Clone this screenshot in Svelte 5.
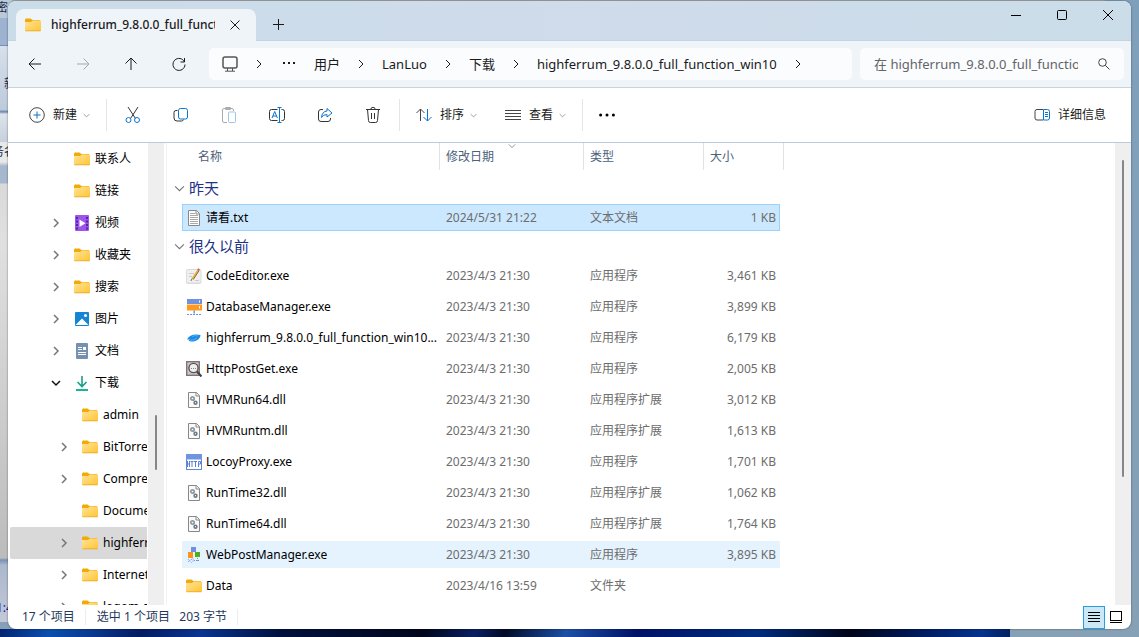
<script>
	const crumbs = ["用户", "LanLuo", "下载", "highferrum_9.8.0.0_full_function_win10"];

	const tree = [
		{ name: "联系人", icon: "folder" },
		{ name: "链接", icon: "folder" },
		{ name: "视频", icon: "video", arrow: "closed" },
		{ name: "收藏夹", icon: "folder", arrow: "closed" },
		{ name: "搜索", icon: "folder", arrow: "closed" },
		{ name: "图片", icon: "picture", arrow: "closed" },
		{ name: "文档", icon: "document", arrow: "closed" },
		{ name: "下载", icon: "download", arrow: "open" },
		{ name: "admin", icon: "folder", child: true },
		{ name: "BitTorrent", icon: "folder", child: true, arrow: "closed" },
		{ name: "Compressed", icon: "folder", child: true, arrow: "closed" },
		{ name: "Documents", icon: "folder", child: true },
		{ name: "highferrum_9.8.0.0", icon: "folder", child: true, arrow: "closed" },
		{ name: "Internet", icon: "folder", child: true, arrow: "closed" },
		{ name: "logom.cn", icon: "folder", child: true, arrow: "closed" },
	];

	const columns = ["名称", "修改日期", "类型", "大小"];

	const groups = [
		{
			title: "昨天",
			files: [{ name: "请看.txt", icon: "text", date: "2024/5/31 21:22", type: "文本文档", size: "1 KB" }],
		},
		{
			title: "很久以前",
			files: [
				{ name: "CodeEditor.exe", icon: "editor", date: "2023/4/3 21:30", type: "应用程序", size: "3,461 KB" },
				{ name: "DatabaseManager.exe", icon: "database", date: "2023/4/3 21:30", type: "应用程序", size: "3,899 KB" },
				{ name: "highferrum_9.8.0.0_full_function_win10...", icon: "train", date: "2023/4/3 21:30", type: "应用程序", size: "6,179 KB" },
				{ name: "HttpPostGet.exe", icon: "lens", date: "2023/4/3 21:30", type: "应用程序", size: "2,005 KB" },
				{ name: "HVMRun64.dll", icon: "dll", date: "2023/4/3 21:30", type: "应用程序扩展", size: "3,012 KB" },
				{ name: "HVMRuntm.dll", icon: "dll", date: "2023/4/3 21:30", type: "应用程序扩展", size: "1,613 KB" },
				{ name: "LocoyProxy.exe", icon: "http", date: "2023/4/3 21:30", type: "应用程序", size: "1,701 KB" },
				{ name: "RunTime32.dll", icon: "dll", date: "2023/4/3 21:30", type: "应用程序扩展", size: "1,062 KB" },
				{ name: "RunTime64.dll", icon: "dll", date: "2023/4/3 21:30", type: "应用程序扩展", size: "1,764 KB" },
				{ name: "WebPostManager.exe", icon: "web", date: "2023/4/3 21:30", type: "应用程序", size: "3,895 KB" },
				{ name: "Data", icon: "folder", date: "2023/4/16 13:59", type: "文件夹", size: "" },
			],
		},
	];

	let currentFolder = $state("highferrum_9.8.0.0");
	let selected = $state("请看.txt");
	let hovered = $state("WebPostManager.exe");
	let view = $state("details");
</script>

{#snippet chevron(dir, size = 10)}
	<svg class="line" width={size} height={size} viewBox="0 0 10 10">
		{#if dir === "right"}
			<path d="M3 1l4 4-4 4" />
		{:else}
			<path d="M1 3l4 4 4-4" />
		{/if}
	</svg>
{/snippet}

{#snippet icon(name)}
	<svg class="icon" width="16" height="16" viewBox="0 0 16 16">
		{#if name === "folder"}
			<path fill="#f2a90d" d="M0 3.2C0 2 .5 1.500 1.500 1.500H5.500L7.500 3H15V7H0z" />
			<path fill="url(#folder-fill)" d="M0 5H6L8 3.500H15C15.700 3.500 16 3.900 16 4.500V13C16 13.700 15.700 14 15 14H1C.3 14 0 13.700 0 13z" />
			<path fill="#e8a317" d="M.4 13.500H15.600V14.200H.4z" />
		{:else if name === "video"}
			<rect x="1" width="14" height="16" rx="1" fill="#9b55ea" />
			<path fill="#5b21a8" d="M2 2h2v2H2zM2 5.500h2v2H2zM2 9h2v2H2zM2 12.500h2v2H2zM12 2h2v2h-2zM12 5.500h2v2h-2zM12 9h2v2h-2zM12 12.500h2v2h-2z" />
			<path fill="#fff" d="M5.500 4.500l6 3.700-6 3.700z" />
		{:else if name === "picture"}
			<rect x="1" y="1" width="14" height="14" rx="1" fill="#1385d4" />
			<path fill="#fff" d="M1.500 14l6.500-6.500 6.500 6.500z" />
			<circle cx="11.500" cy="4.500" r="1.500" fill="#fff" />
		{:else if name === "document"}
			<rect x="2" y="0" width="12" height="16" rx="1" fill="#7492b0" />
			<path stroke="#fff" stroke-width="1" d="M4 4.500h4M4 6.500h4M4 9.500h8M4 11.500h8" />
			<path fill="#fff" d="M9 4h3v3H9z" />
		{:else if name === "download"}
			<path fill="none" stroke="#16a085" stroke-width="1.600" d="M8 1v10M3.500 7L8 11.500 12.500 7" />
			<path stroke="#1bb39a" stroke-width="2" d="M2 15h12" />
		{:else if name === "text"}
			<path fill="#fff" stroke="#888" d="M2.500.5h8l3 3v12h-11z" />
			<path fill="none" stroke="#888" d="M10 .5v3.500h3.500" />
			<path stroke="#aaa" d="M4 3.500h5M4 5.500h8M4 7.500h8M4 9.500h8M4 11.500h8M4 13.500h8" />
		{:else if name === "editor"}
			<rect y="1" width="15.500" height="15" rx="2" fill="#dcdcdc" />
			<rect x="1" y="2" width="13.500" height="12.500" rx="1" fill="#efefef" />
			<path stroke="#bbb" stroke-width=".7" d="M3 5.500h5M3 8.500h3M9 12.500h4" />
			<path stroke="#e8b23a" stroke-width="2.200" d="M6.500 11L12 2.500" />
			<path stroke="#654" stroke-width=".8" d="M5 13l1-2.500M7.200 11.500l6-9" />
			<path stroke="#c9604c" stroke-width="2" d="M12 2.500L13 .8" />
		{:else if name === "database"}
			<path fill="#6f91df" d="M1 0h15v5H1z" />
			<path fill="#ff9a20" d="M1 5.500h15v6H1z" />
			<path fill="#fff" d="M13 1.500h1v2h-1zM13 7h1v2.500h-1z" />
			<path fill="#6f91df" d="M7.500 11.500h1.500v3H7.500z" />
			<path stroke="#6f91df" stroke-dasharray="2 1" d="M1 15.500h15" />
		{:else if name === "train"}
			<path fill="#188be8" d="M1 9.500C3.500 5 8 3.500 14.500 5C14.500 7 13 9 11 10.300C8 12 4 11.800 2.500 10.800L4 9.500z" />
			<path fill="none" stroke="#7cc4ff" stroke-width=".6" d="M6 6.500Q9 5 12 6M4 10.300Q8 10.500 11 8" />
		{:else if name === "lens"}
			<rect x=".7" y=".7" width="12.600" height="13.600" fill="#ccc6c6" stroke="#7c6c6c" stroke-width="1.300" />
			<circle cx="7.500" cy="7" r="4.600" fill="#eee" stroke="#555" stroke-width="1.400" />
			<path stroke="#888" stroke-dasharray="1 1" d="M5 7.500h5" />
			<path stroke="#444" stroke-width="2.200" d="M11 10.500l4.500 5" />
		{:else if name === "dll"}
			<path fill="#fafafa" stroke="#888" d="M2.500.5h8l3 3v12h-11z" />
			<path fill="none" stroke="#888" d="M10 .5v3.500h3.500" />
			<circle cx="6.500" cy="6.500" r="1.700" fill="#fff" stroke="#8f9da6" stroke-width="1.800" />
			<circle cx="9.500" cy="10.700" r="1.400" fill="#fff" stroke="#6c7a83" stroke-width="1.600" />
		{:else if name === "http"}
			<rect x=".5" y=".5" width="15" height="15" fill="#fff" stroke="#6287d8" />
			<path fill="#7094e0" d="M0 0h16v5.500H0z" />
			<path fill="none" stroke="#5a80d4" d="M1.500 7v6M3.500 7v6M1.500 10h2M4.500 7.500h3M6 7.500V13M8 7.500h3M9.500 7.500V13M12.500 13V7.500h2V10h-2" />
		{:else if name === "web"}
			<path fill="#6f91df" d="M5 0h5v5H5z" />
			<path fill="#ff9218" d="M2 5h5v6H2z" />
			<path fill="#4caf20" d="M9 5h5v5H9z" />
			<path fill="none" stroke="#6f91df" stroke-dasharray="1 1" d="M2 12l4 4M7 11.500v4M2 15l4-3M11.500 11v4M8 13.500h6" />
		{/if}
	</svg>
{/snippet}

<svg class="defs" width="0" height="0" aria-hidden="true">
	<linearGradient id="folder-fill" x2="1" y2="1">
		<stop offset="0" stop-color="#ffe499" />
		<stop offset="1" stop-color="#ffc533" />
	</linearGradient>
</svg>

<div class="desktop">
	<!-- another program's window, only its edge peeks out -->
	<div class="behind" aria-hidden="true">
		<span class="crop one">密</span>
		<span class="crop two">新</span>
		<span class="crop three">务名</span>
		<span class="crop four">1:4</span>
	</div>

	<div class="window">
		<header class="titlebar">
			<div class="tab">
				{@render icon("folder")}
				<span class="tab-title">highferrum_9.8.0.0_full_function_win10</span>
				<button class="tab-close" aria-label="关闭标签页">
					<svg class="line" width="10" height="10" viewBox="0 0 10 10"><path d="M.5.5l9 9M9.500.5l-9 9" /></svg>
				</button>
			</div>
			<button class="tab-add" aria-label="新标签页">
				<svg class="line" width="11" height="11" viewBox="0 0 11 11"><path d="M5.500 0v11M0 5.500h11" /></svg>
			</button>
			<div class="caption">
				<button aria-label="最小化"><svg class="line" width="10" height="10" viewBox="0 0 10 10"><path d="M0 5.500h10" /></svg></button>
				<button aria-label="最大化"><svg class="line" width="10" height="10" viewBox="0 0 10 10"><rect x=".5" y=".5" width="9" height="9" rx="1" /></svg></button>
				<button aria-label="关闭"><svg class="line" width="10" height="10" viewBox="0 0 10 10"><path d="M0 0l10 10M10 0L0 10" /></svg></button>
			</div>
		</header>

		<nav class="navbar">
			<div class="history">
				<button aria-label="后退"><svg class="line" width="14" height="14" viewBox="0 0 14 14"><path d="M13 7H1M6.500 1.500L1 7l5.500 5.500" /></svg></button>
				<button aria-label="前进" disabled><svg class="line" width="14" height="14" viewBox="0 0 14 14"><path d="M1 7h12M7.500 1.500L13 7l-5.500 5.500" /></svg></button>
				<button aria-label="向上"><svg class="line" width="14" height="14" viewBox="0 0 14 14"><path d="M7 13V1M1.500 6.500L7 1l5.500 5.500" /></svg></button>
				<button aria-label="刷新"><svg class="line" width="14" height="14" viewBox="0 0 14 14"><path d="M12.500 5A6 6 0 1 0 13 7.500M12.500 1v4h-4" /></svg></button>
			</div>
			<div class="address">
				<button class="device" aria-label="此电脑">
					<svg class="line" width="16" height="16" viewBox="0 0 16 16"><rect x="1" y="1" width="14" height="11" rx="2" stroke-width="1.500" /><path d="M5.500 12v3M10.500 12v3M3 15.200h10" /></svg>
				</button>
				<span class="sep">{@render chevron("right")}</span>
				<button class="more" aria-label="更多位置">
					<svg width="12" height="12" viewBox="0 0 12 12"><path fill="currentColor" d="M0 4h2v2H0zM5 4h2v2H5zM10 4h2v2h-2z" /></svg>
				</button>
				{#each crumbs as crumb (crumb)}
					<a href="#{crumb}">{crumb}</a>
					<span class="sep">{@render chevron("right")}</span>
				{/each}
			</div>
			<label class="search">
				<input type="text" aria-label="搜索" placeholder="在 highferrum_9.8.0.0_full_function_win10 中搜索" />
				<svg class="line" width="12" height="12" viewBox="0 0 12 12"><circle cx="4.500" cy="4.500" r="3.800" /><path d="M7.300 7.300l4.200 4.200" /></svg>
			</label>
		</nav>

		<div class="toolbar">
			<button class="wide">
				<svg class="line" width="16" height="16" viewBox="0 0 16 16"><circle cx="8" cy="8" r="7.300" /><path class="blue" d="M8 4.500v7M4.500 8h7" /></svg>
				新建
				<span class="drop">{@render chevron("down", 7)}</span>
			</button>
			<span class="rule"></span>
			<button aria-label="剪切">
				<svg class="line" width="16" height="18" viewBox="0 0 16 18"><path d="M3 1l7.500 11.500M13 1L5.500 12.500" /><circle class="blue" cx="3.500" cy="14" r="2.500" /><circle class="blue" cx="12" cy="14" r="2.500" /></svg>
			</button>
			<button aria-label="复制">
				<svg class="line" width="16" height="16" viewBox="0 0 16 16"><path d="M4.500 3.500H3A2 2 0 0 0 1 5.500V11a3 3 0 0 0 3 3h4.500a2 2 0 0 0 2-1.500" /><rect class="blue" x="5.500" y="1.500" width="9" height="10.500" rx="2" /></svg>
			</button>
			<button aria-label="粘贴" disabled>
				<svg class="line" width="16" height="18" viewBox="0 0 16 18"><path d="M6 16.500H3A1.500 1.500 0 0 1 1.500 15V4A1.500 1.500 0 0 1 3 2.500h8A1.500 1.500 0 0 1 12.500 4v1M4.500 1.500h5v2h-5z" /><rect class="blue" x="7.500" y="6" width="7" height="10.500" rx="1" /></svg>
			</button>
			<button aria-label="重命名">
				<svg class="line" width="18" height="16" viewBox="0 0 18 16"><path d="M9.500 2.500h-6a2 2 0 0 0-2 2v7a2 2 0 0 0 2 2h6M13.500 2.500h1a2 2 0 0 1 2 2v7a2 2 0 0 1-2 2h-1" /><path class="blue" d="M11.500 1v14M9.500.5h4M9.500 15.500h4M4 11l2.700-6.500L9.400 11M5 9h3.500" /></svg>
			</button>
			<button aria-label="共享">
				<svg class="line" width="16" height="16" viewBox="0 0 16 16"><path d="M6 2.500H4a2.500 2.500 0 0 0-2.500 2.500v7A2.500 2.500 0 0 0 4 14.500h7a2.500 2.500 0 0 0 2.500-2.500v-1" /><path class="blue" d="M10 1.500l5 4.500-5 4V7.500Q6 7.500 4.500 10.500 5 4.500 10 4z" /></svg>
			</button>
			<button aria-label="删除">
				<svg class="line" width="16" height="18" viewBox="0 0 16 18"><path d="M1 3.500h14M5.800 3.500a2.200 2.200 0 0 1 4.400 0M2.500 3.500l1 11a2 2 0 0 0 2 2h5a2 2 0 0 0 2-2l1-11M6.500 7v6M9.500 7v6" /></svg>
			</button>
			<span class="rule"></span>
			<button class="wide">
				<svg class="line" width="16" height="14" viewBox="0 0 16 14"><path d="M4.500 13V1M.5 5l4-4 4 4" /><path class="blue" d="M11.500 1v12M7.500 9l4 4 4-4" /></svg>
				排序
				<span class="drop">{@render chevron("down", 7)}</span>
			</button>
			<button class="wide">
				<svg class="line" width="16" height="14" viewBox="0 0 16 14"><path d="M0 2.500h16M0 5.500h16M0 8.500h16M0 11.500h16" /></svg>
				查看
				<span class="drop">{@render chevron("down", 7)}</span>
			</button>
			<span class="rule"></span>
			<button aria-label="更多">
				<svg width="16" height="4" viewBox="0 0 16 4"><circle cx="1.600" cy="2" r="1.500" /><circle cx="8" cy="2" r="1.500" /><circle cx="14.400" cy="2" r="1.500" /></svg>
			</button>
			<button class="wide details">
				<svg class="line" width="16" height="14" viewBox="0 0 16 14"><path d="M9 1.500H3a2 2 0 0 0-2 2v6.500a2 2 0 0 0 2 2h6" /><path class="blue" d="M9.500 1.500H13.500a2 2 0 0 1 2 2V10a2 2 0 0 1-2 2H9.500zM11 4.500h3M11 6.500h3M11 8.500h3" /></svg>
				详细信息
			</button>
		</div>

		<div class="body">
			<aside class="sidebar">
				<ul>
					{#each tree as node (node.name)}
						<li>
							<button
								class:child={node.child}
								class:current={currentFolder === node.name}
								onclick={() => (currentFolder = node.name)}>
								<span class="arrow" class:open={node.arrow === "open"}>
									{#if node.arrow}
										{@render chevron(node.arrow === "open" ? "down" : "right")}
									{/if}
								</span>
								{@render icon(node.icon)}
								<span>{node.name}</span>
							</button>
						</li>
					{/each}
				</ul>
			</aside>
			<div class="track tree-track"><span class="thumb"></span></div>

			<main class="files">
				<table>
					<colgroup>
						<col class="c-name" />
						<col class="c-date" />
						<col class="c-type" />
						<col class="c-size" />
					</colgroup>
					<thead>
						<tr>
							{#each columns as column, i (column)}
								<th>
									<button>
										{column}
										{#if i === 1}
											<span class="sorted">{@render chevron("down", 8)}</span>
										{/if}
									</button>
								</th>
							{/each}
						</tr>
					</thead>
					{#each groups as group (group.title)}
						<tbody>
							<tr class="group">
								<td colspan="4">
									<button><span class="fold">{@render chevron("down", 11)}</span>{group.title}</button>
								</td>
							</tr>
							{#each group.files as file (file.name)}
								<tr
									class="file"
									class:hovered={hovered === file.name}
									class:selected={selected === file.name}
									onmouseenter={() => (hovered = file.name)}
									onclick={() => (selected = file.name)}>
									<td><span class="name">{@render icon(file.icon)}{file.name}</span></td>
									<td>{file.date}</td>
									<td>{file.type}</td>
									<td>{file.size}</td>
								</tr>
							{/each}
						</tbody>
					{/each}
				</table>
			</main>
			<div class="track file-track"><span class="thumb"></span></div>
		</div>

		<footer class="status">
			<span>17 个项目</span>
			<span class="picked">选中 1 个项目&nbsp;&nbsp; 203 字节</span>
			<div class="views">
				<button class:on={view === "details"} aria-label="详细信息视图" onclick={() => (view = "details")}>
					<svg class="line" width="12" height="12" viewBox="0 0 12 12"><path d="M0 1.500h12M0 4.500h12M0 7.500h12M0 10.500h12" /></svg>
				</button>
				<button class:on={view === "large"} aria-label="大图标视图" onclick={() => (view = "large")}>
					<svg class="line" width="12" height="12" viewBox="0 0 12 12"><rect x=".5" y=".5" width="11" height="9" /><path d="M0 11.500h12" /></svg>
				</button>
			</div>
		</footer>
	</div>
</div>

<style>
	:global(body) {
		font: 12px/16px "Noto Sans", "Noto Sans CJK SC", sans-serif;
		color: #1a1a1a;
	}
	button,
	input {
		font: inherit;
		color: inherit;
		border: 0;
		padding: 0;
		margin: 0;
		background: none;
	}
	svg {
		display: block;
		flex: none;
	}
	.defs {
		position: absolute;
	}
	.line {
		fill: none;
		stroke: currentColor;
		overflow: visible;
	}
	.desktop {
		box-sizing: border-box;
		height: 100vh;
		padding: 1px 8px 8px;
		position: relative;
		overflow: hidden;
		background:
			linear-gradient(#a9a9ad, #a9a9ad) 0 0 / 97% 1px no-repeat,
			linear-gradient(110deg, #03236f, #0c4fae 5%, #0a3a90 9%, #051b60 14%, #0b3590 20%, #00103c 28%, #01061c 42%, #0a1f60 47%, #020a26 50%, #1d50a5 56%, #001266 63%, #002c7c 75%, #000418 84%, #001a5c 91%, #06338c 97%, #04225e) 0 100% / 1010px 8px no-repeat,
			linear-gradient(#7fa0bb, #86a0b5);
	}
	.behind {
		position: absolute;
		left: 0;
		top: 0;
		width: 12px;
		height: 622px;
		overflow: hidden;
		color: #222c44;
		background: linear-gradient(#b9c9d8 18px, #9eb2d1 18px, #9eb2d1 45px, #7690b5 45px, #7690b5 46px, #d7e0eb 46px, #bccadb 110px, #7790b4 111px, #7790b4 112px, #dce3eb 114px, #c5d0dd 142px, #e9e9e9 142px, #e9e9e9 162px, #a5b8ce 166px, #a5b8ce 183px, #d9d9d9 184px, #e0e0e0 240px, #bcbcbc 558px, #7890b4 560px, #abb8cd 565px, #c2c9d6);
	}
	.crop {
		position: absolute;
		left: -4px;
		white-space: nowrap;
	}
	.one {
		top: 0;
	}
	.two {
		top: 76px;
		left: 4px;
	}
	.three {
		top: 144px;
		left: -8px;
	}
	.four {
		top: 600px;
		color: #1c0fa0;
	}
	.window {
		height: 100%;
		display: flex;
		flex-direction: column;
		overflow: hidden;
		position: relative;
		border-radius: 8px;
		background: #fff;
		box-shadow: 0 0 2px #0008;
	}

	.titlebar {
		display: flex;
		align-items: flex-end;
		height: 39px;
		padding-left: 8px;
		border-bottom: 1px solid #c3d3e2;
		background: linear-gradient(90deg, #cbdce9, #ccdcea 25%, #d0dbeb 50%, #cddcea 75%, #cbdde9);
	}
	.tab {
		box-sizing: border-box;
		display: flex;
		align-items: center;
		width: 240px;
		height: 32px;
		margin-bottom: -1px;
		padding: 0 9px;
		gap: 10px;
		border-radius: 8px 8px 0 0;
		background: #eff4f9;
	}
	.tab-title {
		width: 164px;
		overflow: hidden;
		white-space: nowrap;
		font-weight: 500;
	}
	.tab-close {
		padding: 5px;
	}
	.tab-add {
		height: 32px;
		padding: 0 17px;
	}
	.caption {
		display: flex;
		align-self: flex-start;
		margin-left: auto;
	}
	.caption button {
		display: grid;
		place-items: center;
		width: 46px;
		height: 28px;
		color: #000;
	}

	.navbar {
		display: flex;
		align-items: center;
		gap: 8px;
		height: 46px;
		padding: 0 7px 0 3px;
		border-bottom: 1px solid #c9d3dd;
		background: #eff4f9;
		font-size: 13px;
	}
	.history {
		flex: none;
		display: flex;
		margin-right: -2px;
	}
	.history button {
		display: grid;
		place-items: center;
		width: 48px;
		height: 32px;
	}
	.history button:disabled {
		color: #a4a9ad;
	}
	.address {
		flex: 1;
		display: flex;
		align-items: center;
		min-width: 0;
		height: 32px;
		padding-left: 13px;
		border-radius: 5px;
		background: #fbfcfe;
	}
	.device {
		color: #555;
	}
	.sep {
		display: grid;
		place-items: center;
		width: 42px;
	}
	.more {
		display: grid;
		place-items: center;
		width: 18px;
		margin-right: 16px;
	}
	.address a {
		white-space: nowrap;
		color: inherit;
		text-decoration: none;
	}
	.search {
		box-sizing: border-box;
		display: flex;
		align-items: center;
		gap: 20px;
		width: 264px;
		height: 32px;
		padding: 0 14px;
		border-radius: 5px;
		background: #fbfcfe;
		color: #444;
	}
	.search input {
		flex: 1;
		min-width: 0;
		outline: none;
	}
	.search input::placeholder {
		color: #616569;
		opacity: 1;
	}

	.toolbar {
		display: flex;
		align-items: center;
		height: 54px;
		padding: 0 13px;
		border-bottom: 1px solid #bccbdc;
	}
	.toolbar button {
		display: flex;
		align-items: center;
		justify-content: center;
		width: 48px;
		height: 32px;
		color: #333;
	}
	.toolbar .wide {
		width: auto;
		padding: 0 8px;
		gap: 8px;
		color: #1a1a1a;
	}
	.toolbar .wide svg {
		color: #444;
	}
	.toolbar .wide + .wide {
		margin-left: 12px;
	}
	.toolbar button.details {
		margin-left: auto;
		padding: 0 12px;
	}
	.toolbar button:disabled {
		opacity: 0.4;
	}
	.drop {
		margin-left: -2px;
	}
	.toolbar .drop {
		opacity: 0.7;
	}
	.blue {
		stroke: #0a74cf;
	}
	.rule {
		width: 1px;
		height: 32px;
		margin: 0 2px 0 8px;
		background: #e5e5e5;
	}
	.wide + .wide + .rule {
		margin-right: 0;
	}
	button:not(.wide) + .rule {
		margin: 0 8px 0 2px;
	}

	.body {
		flex: 1;
		display: flex;
		min-height: 0;
		color: #000;
	}
	.sidebar {
		width: 139px;
		margin-right: 1px;
		overflow: hidden;
	}
	.sidebar ul {
		list-style: none;
		margin: 0;
		padding: 0 0 0 2px;
	}
	.sidebar button {
		display: flex;
		align-items: center;
		gap: 5px;
		width: 100%;
		height: 32px;
		padding-left: 41px;
		overflow: hidden;
		white-space: nowrap;
		border-radius: 2px 0 0 2px;
	}
	.sidebar .child {
		padding-left: 49px;
	}
	.sidebar .current {
		background: #d9d9d9;
	}
	.arrow {
		flex: none;
		width: 18px;
		color: #777;
		stroke-width: 1.5;
	}
	.open {
		color: #111;
	}
	.track {
		display: flex;
		justify-content: center;
		width: 16px;
		background: #efefef;
	}
	.thumb {
		width: 2px;
		border-radius: 1px;
		background: #868686;
	}
	.tree-track .thumb {
		height: 55px;
		margin-top: 272px;
	}
	.file-track .thumb {
		height: 317px;
		margin-top: 17px;
	}

	.files {
		flex: 1;
		min-width: 0;
		overflow: hidden;
		margin-left: 2px;
		padding-left: 7px;
		border-left: 1px solid #f2f2f2;
		color: #6d6d6d;
	}
	table {
		width: 610px;
		table-layout: fixed;
		border-collapse: separate;
		border-spacing: 0;
	}
	.c-name {
		width: 266px;
	}
	.c-date {
		width: 144px;
	}
	.c-type {
		width: 120px;
	}
	.c-size {
		width: 80px;
	}
	th {
		height: 34px;
		padding: 0;
		vertical-align: top;
		font-weight: 400;
	}
	th button {
		display: block;
		position: relative;
		width: 100%;
		height: 27px;
		padding-left: 6px;
		border-right: 1px solid #e2e2e2;
		text-align: left;
		color: #4c607a;
	}
	th:first-child button {
		padding-left: 24px;
	}
	.sorted {
		position: absolute;
		top: -1px;
		left: 50%;
		margin-left: -4px;
		color: #777;
	}
	.group td {
		height: 27px;
		padding: 0;
		vertical-align: top;
	}
	.group button {
		display: flex;
		align-items: center;
		gap: 4px;
		height: 22px;
		font-size: 15px;
		color: #1e3287;
	}
	.fold {
		color: #777;
	}
	.file td {
		height: 27px;
		padding: 0 0 0 6px;
		border-bottom: 4px solid transparent;
		background-clip: padding-box;
		white-space: nowrap;
	}
	.file td:first-child {
		padding-left: 4px;
		border-left: 8px solid transparent;
		color: #000;
	}
	.file td:last-child {
		padding-right: 4px;
		border-right: 4px solid transparent;
		text-align: right;
	}
	.name {
		display: flex;
		align-items: center;
		gap: 4px;
	}
	.hovered td {
		background-color: #e5f3ff;
	}
	.selected td {
		background-color: #cce8ff;
		box-shadow: inset 0 1px #99d1ff, inset 0 -1px #99d1ff;
	}
	.selected td:first-child {
		box-shadow: inset 1px 1px #99d1ff, inset 0 -1px #99d1ff;
	}
	.selected td:last-child {
		box-shadow: inset -1px 1px #99d1ff, inset 0 -1px #99d1ff;
	}

	.status {
		display: flex;
		align-items: center;
		height: 24px;
		padding: 0 4px 0 14px;
		color: #1e395b;
	}
	.status > span {
		padding-right: 10px;
		border-right: 1px solid #ececec;
	}
	.status .picked {
		padding-left: 11px;
	}
	.views {
		display: flex;
		margin-left: auto;
		color: #000;
	}
	.views button {
		box-sizing: border-box;
		display: grid;
		place-items: center;
		width: 22px;
		height: 23px;
	}
	.views .on {
		border: 1px solid #26a0da;
		background: #cce8f6;
	}
</style>
